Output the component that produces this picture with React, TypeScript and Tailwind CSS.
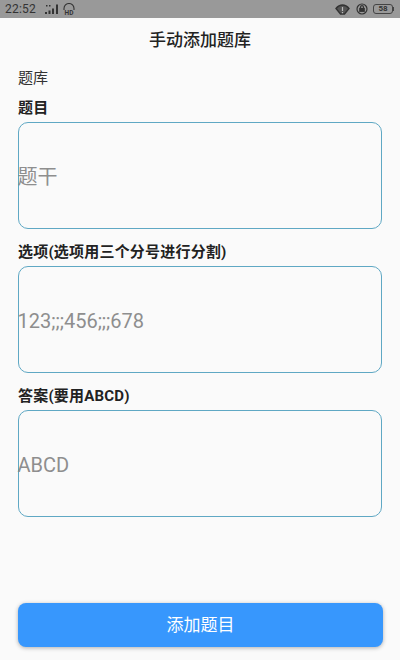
const fields = [
  { label: "题目", placeholder: "题干" },
  { label: "选项(选项用三个分号进行分割)", placeholder: "123;;;456;;;678" },
  { label: "答案(要用ABCD)", placeholder: "ABCD" },
];

function StatusBar() {
  return (
    <div className="h-[18px] bg-[#999999] flex items-center justify-between pl-[5px] pr-[6px] text-[#333333]">
      <div className="flex items-center gap-[9px]">
        <span className="text-[12px] leading-none tracking-[0.2px]">22:52</span>
        <div className="flex items-center gap-[4px]">
          <svg width="14" height="11" viewBox="0 0 14 11" fill="#333333">
            <rect x="1" y="1" width="1.500" height="1.500" />
            <rect x="4" y="1" width="1.500" height="1.500" />
            <rect x="0" y="8" width="2" height="2" />
            <rect x="3.500" y="6.500" width="2" height="3.500" />
            <rect x="7" y="4.500" width="2" height="5.500" />
            <rect x="11" y="0.500" width="2" height="9.500" />
          </svg>
          <svg width="12" height="12" viewBox="0 0 12 12" fill="none" stroke="#333333">
            <path d="M1 7V5.500a5 5 0 0 1 10 0V7" strokeWidth="1.100" />
            <text x="6" y="11.500" fontSize="6.500" fontWeight="700" textAnchor="middle" fill="#333333" stroke="none">HD</text>
          </svg>
        </div>
      </div>
      <div className="flex items-center">
        <svg width="15" height="12" viewBox="0 0 15 12" fill="none" stroke="#333333" strokeWidth="1.400">
          <path d="M1 5.500C3 3 5 2 7.500 2s4.500 1 6.500 3.500L9.500 11h-4z" fill="#555555" />
          <path d="M7.500 4v4M7.500 9v1.200" stroke="#bbbbbb" strokeWidth="1.200" />
        </svg>
        <svg className="ml-[6px]" width="12" height="12" viewBox="0 0 12 12" fill="none" stroke="#333333" strokeWidth="1.200">
          <circle cx="6" cy="6" r="5" />
          <rect x="3.800" y="5.500" width="4.400" height="2.800" fill="#333333" />
          <path d="M4.500 5.500V4.200a1.500 1.500 0 0 1 3 0v1.300" />
        </svg>
        <div className="ml-[5px] w-[20px] h-[10px] rounded-[3px] border border-[#444444] flex items-center justify-center text-[8px] font-bold leading-none">
          58
        </div>
        <div className="w-[1px] h-[4px] bg-[#444444]" />
      </div>
    </div>
  );
}

export default function App() {
  return (
    <div
      className="w-[400px] h-[660px] bg-[#fafafa] flex flex-col overflow-hidden"
      style={{ fontFamily: 'Roboto, "Noto Sans CJK SC", sans-serif' }}
    >
      <StatusBar />
      <header className="h-[44px] pt-[1px] flex items-center justify-center text-[17px] font-medium text-[#222222]">
        手动添加题库
      </header>
      <main className="flex-1 flex flex-col px-[18px]">
        <div className="mt-[6px] text-[15px] leading-[20px] text-[#333333]">题库</div>
        {fields.map((field, i) => (
          <div key={field.label} className={i === 0 ? "mt-[9px]" : "mt-[12px]"}>
            <div className="pt-[1px] text-[15px] leading-[20px] tracking-[0.2px] font-bold text-[#222222]">{field.label}</div>
            <div className="mt-[4px] h-[107px] rounded-[10px] border-[1.5px] border-[#5fa8c4] flex items-center text-[20px] text-[#8e8e8e]">
              <span className="-ml-[1.5px] pt-[2px]">{field.placeholder}</span>
            </div>
          </div>
        ))}
      </main>
      <button className="ml-[18px] mr-[17px] mb-[13px] pt-[2px] h-[44px] rounded-[8px] bg-[#3797fd] text-white text-[17px] shadow-[0_1px_4px_rgba(0,0,0,0.3)]">
        添加题目
      </button>
    </div>
  );
}
